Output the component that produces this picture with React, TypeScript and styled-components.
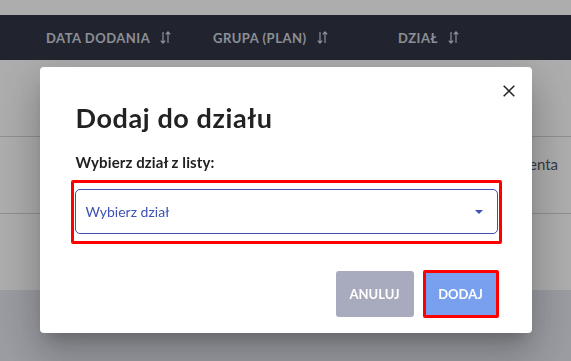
import styled, { createGlobalStyle } from 'styled-components';

const GlobalStyle = createGlobalStyle`
  html, body {
    margin: 0;
    padding: 0;
    width: 571px;
    height: 361px;
    overflow: hidden;
    font-family: Lato, "Open Sans", sans-serif;
  }
`;

const columns = ['DATA DODANIA', 'GRUPA (PLAN)', 'DZIAŁ'];

const SortIcon = () => (
  <svg width="11" height="13" viewBox="0 0 11 13" fill="none">
    <path
      d="M3 1v11M0.8 9.6L3 12l2.2-2.4M8 12V1M5.8 3.4L8 1l2.2 2.4"
      stroke="currentColor"
      strokeWidth="1.2"
    />
  </svg>
);

const CloseIcon = () => (
  <svg width="12" height="12" viewBox="0 0 12 12">
    <path d="M0.7 0.7l10.6 10.6M11.3 0.7L0.7 11.3" stroke="#222" strokeWidth="1.5" />
  </svg>
);

const App = () => {
  return (
    <>
      <GlobalStyle />
      <Page>
        <TopStrip />
        <TableHead>
          {columns.map((c) => (
            <HeadCell key={c}>
              {c}
              <SortIcon />
            </HeadCell>
          ))}
        </TableHead>
        <Row />
        <Row>
          <Cell $col={3}>Obsługa klienta</Cell>
        </Row>
        <Row $last />
        <Footer />
      </Page>
      <Overlay>
        <Dialog>
          <CloseButton>
            <CloseIcon />
          </CloseButton>
          <Title>Dodaj do działu</Title>
          <Label>Wybierz dział z listy:</Label>
          <Highlight>
            <Select>
              <span>Wybierz dział</span>
              <Caret />
            </Select>
          </Highlight>
          <Actions>
            <Button $variant="cancel">Anuluj</Button>
            <Highlight $tight>
              <Button $variant="primary">Dodaj</Button>
            </Highlight>
          </Actions>
        </Dialog>
      </Overlay>
    </>
  );
};

export default App;

const Page = styled.div`
  width: 571px;
  height: 361px;
  display: flex;
  flex-direction: column;
  background: #ffffff;
`;

const TopStrip = styled.div`
  height: 15px;
  background: #ffffff;
`;

const TableHead = styled.div`
  height: 45px;
  display: grid;
  grid-template-columns: 167px 185px 1fr;
  align-items: center;
  padding-left: 46px;
  background: #323645;
  color: #d0d4de;
`;

const HeadCell = styled.div`
  display: flex;
  align-items: center;
  gap: 10px;
  font-size: 13px;
  font-weight: 700;
  letter-spacing: 0.5px;
`;

const Row = styled.div<{ $last?: boolean }>`
  height: 76px;
  display: grid;
  grid-template-columns: 167px 185px 1fr;
  padding-left: 46px;
  border-bottom: ${(p) => (p.$last ? 'none' : '1px solid #d4d4d4')};
`;

const Cell = styled.div<{ $col: number }>`
  grid-column: ${(p) => p.$col};
  padding: 18px 13px 0 0;
  text-align: right;
  font-size: 15px;
  color: #525866;
  white-space: nowrap;
`;

const Footer = styled.div`
  flex: 1;
  background: #e3e6ef;
`;

const Overlay = styled.div`
  position: fixed;
  inset: 0;
  display: flex;
  justify-content: center;
  align-items: flex-start;
  padding-top: 67px;
  background: rgba(0, 0, 0, 0.32);
`;

const Dialog = styled.div`
  position: relative;
  width: 492px;
  box-sizing: border-box;
  padding: 31px 30px 15px 31px;
  background: #ffffff;
  border-radius: 4px;
  box-shadow: 0 11px 15px -7px rgba(0, 0, 0, 0.2),
    0 24px 38px 3px rgba(0, 0, 0, 0.14), 0 9px 46px 8px rgba(0, 0, 0, 0.12);
`;

const CloseButton = styled.div`
  position: absolute;
  top: 18px;
  right: 17px;
  width: 12px;
  height: 12px;
  display: flex;
`;

const Title = styled.h2`
  margin: 0 0 0 5px;
  font-size: 27px;
  line-height: 40px;
  font-weight: 700;
  letter-spacing: 0.6px;
  color: #222222;
`;

const Label = styled.div`
  margin: 14px 0 0 5px;
  font-size: 15px;
  line-height: 20px;
  font-weight: 700;
  letter-spacing: 0.1px;
  color: #222222;
`;

const Highlight = styled.div<{ $tight?: boolean }>`
  margin-top: ${(p) => (p.$tight ? '0' : '8px')};
  padding: ${(p) => (p.$tight ? '0' : '6px 1px 7px')};
  border: 3px solid #ff0000;
  border-radius: 2px;
  display: flex;
`;

const Select = styled.div`
  flex: 1;
  height: 45px;
  box-sizing: border-box;
  display: flex;
  align-items: center;
  justify-content: space-between;
  padding: 0 14px 0 10px;
  border: 1px solid #3f51b5;
  border-radius: 5px;
  font-size: 14px;
  color: #3f51b5;
`;

const Caret = styled.span`
  width: 0;
  height: 0;
  border-left: 4px solid transparent;
  border-right: 4px solid transparent;
  border-top: 4px solid #3f51b5;
`;

const Actions = styled.div`
  display: flex;
  justify-content: flex-end;
  align-items: center;
  gap: 9px;
  margin-top: 26px;
  padding-right: 3px;
`;

const Button = styled.button<{ $variant: 'cancel' | 'primary' }>`
  height: ${(p) => (p.$variant === 'cancel' ? '46px' : '42px')};
  width: ${(p) => (p.$variant === 'cancel' ? '78px' : '70px')};
  border: none;
  border-radius: ${(p) => (p.$variant === 'cancel' ? '3px' : '0')};
  background: ${(p) => (p.$variant === 'cancel' ? '#a8aabd' : '#78a0ee')};
  color: #ffffff;
  font-family: Lato, "Open Sans", sans-serif;
  font-size: 13px;
  font-weight: 700;
  text-transform: uppercase;
  padding: 0;
`;
